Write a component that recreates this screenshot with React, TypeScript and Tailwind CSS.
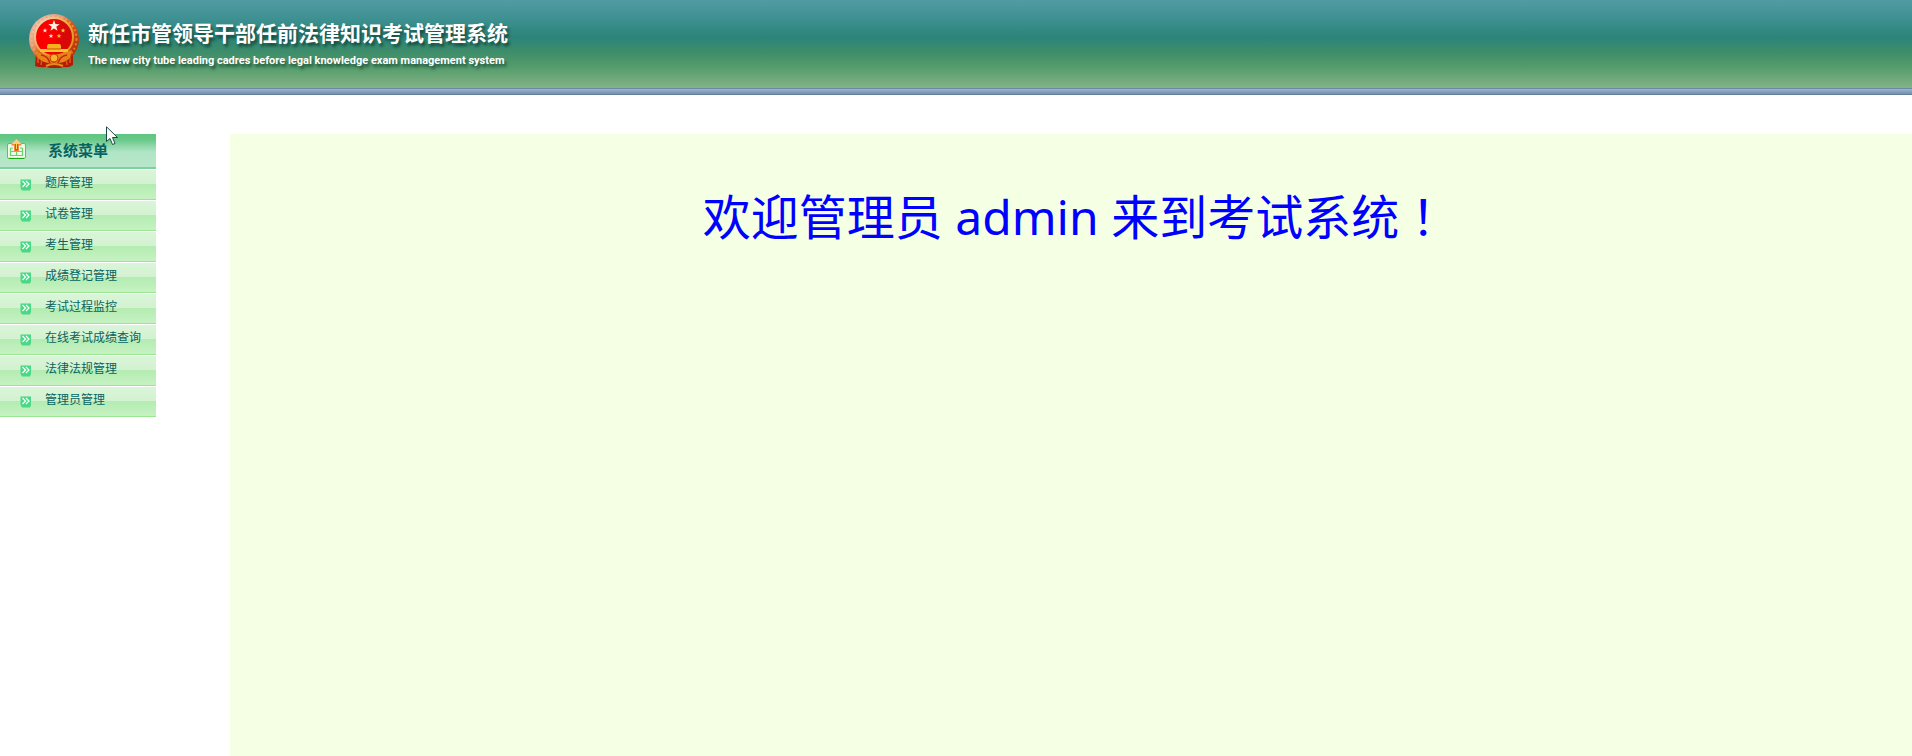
const MENU_ITEMS = [
  '题库管理',
  '试卷管理',
  '考生管理',
  '成绩登记管理',
  '考试过程监控',
  '在线考试成绩查询',
  '法律法规管理',
  '管理员管理',
];

const STAR = '0,-10 2.4,-3.2 9.5,-3.1 3.8,1.2 5.9,8.1 0,4 -5.9,8.1 -3.8,1.2 -9.5,-3.1 -2.4,-3.2';

function Emblem() {
  return (
    <svg className="h-14 w-13 shrink-0" viewBox="0 0 52 56" aria-hidden="true">
      <defs>
        <linearGradient id="wreath" x1="0" y1="0" x2="1" y2="1">
          <stop offset="0" stopColor="#f0c4b2" />
          <stop offset="0.35" stopColor="#e59a80" />
          <stop offset="0.5" stopColor="#dd5a18" />
          <stop offset="1" stopColor="#a81c04" />
        </linearGradient>
        <linearGradient id="ring" x1="0" y1="0" x2="1" y2="1">
          <stop offset="0" stopColor="#f6dccb" />
          <stop offset="0.4" stopColor="#f0b050" />
          <stop offset="1" stopColor="#e08a10" />
        </linearGradient>
        <linearGradient id="disc" x1="0" y1="0" x2="1" y2="0">
          <stop offset="0.5" stopColor="#fa0000" />
          <stop offset="0.7" stopColor="#d80808" />
        </linearGradient>
      </defs>
      <path d="M8 40 L7 53 Q12 55 18 54 L22 55 H32 L36 54 Q41 55 45 52 L45 40Z" fill="#b01c08" />
      <path d="M10 43 L10 50 M14 45 L13 52 M42 43 L42 50 M38 45 L39 52" stroke="#e05818" strokeWidth="1.5" />
      <circle cx="26" cy="26" r="25" fill="url(#wreath)" />
      <circle cx="26" cy="26" r="22.500" fill="none" stroke="url(#ring)" strokeWidth="2" strokeDasharray="2 2.5" opacity="0.75" />
      <circle cx="26" cy="24" r="19" fill="url(#disc)" stroke="url(#ring)" strokeWidth="2" />
      <polygon points={STAR} transform="translate(26 13) scale(0.6)" fill="#fff0dc" />
      <polygon points={STAR} transform="translate(17 17.5) scale(0.26)" fill="#ffe4cc" />
      <polygon points={STAR} transform="translate(35 17.5) scale(0.26)" fill="#ffd030" />
      <polygon points={STAR} transform="translate(23 23) scale(0.26)" fill="#ffe4cc" />
      <polygon points={STAR} transform="translate(31 23) scale(0.26)" fill="#ffc020" />
      <path d="M20 31 H32 L33 33 V36 H19 V33Z" fill="#f5b41c" />
      <path d="M12 36 H40 V39 H12Z" fill="#ffc62b" />
      <path d="M19 36 H33" stroke="#c82806" strokeWidth="0.8" />
      <path d="M7 37 Q16 44 26 42 T44 37 L42 45 Q34 52 26 49 Q18 52 10 45Z" fill="#e8821a" />
      <circle cx="26" cy="45" r="4" fill="#f8b428" stroke="#c93a08" />
      <path d="M13 42 Q20 43 22 50 M39 42 Q32 43 30 50" fill="none" stroke="#c82806" strokeWidth="1.6" />
      <path d="M18 53 Q26 49 35 53" fill="none" stroke="#e68a1c" strokeWidth="2" />
    </svg>
  );
}

function MenuHeaderIcon() {
  return (
    <svg className="h-5 w-5 shrink-0" viewBox="0 0 20 20" aria-hidden="true">
      <rect x="0.500" y="4.500" width="18" height="15" rx="1.5" fill="#eefbe8" stroke="#62bf50" />
      <path d="M2 19.500 H17" stroke="#18a818" strokeWidth="1.2" />
      <path d="M3.500 9 V16.500 H15.500 V9 M3.500 12.500 H15.500 M9.500 12 V16 M3.500 9 H6 M13 9 H15.500" fill="none" stroke="#67d36d" strokeWidth="1.2" />
      <path d="M9.500 0 L14.500 5 V6.500 H12 V12 H7 V6.500 H4.500 V5Z" fill="#f38a3c" />
      <path d="M9.500 0 L14.500 5 H4.500Z" fill="#ffc697" />
      <path d="M8 5 H11 V11.500 H8Z" fill="#ef4a10" />
      <path d="M9 3 H10 V10 H9Z" fill="#ffd25c" />
    </svg>
  );
}

function BulletIcon() {
  return (
    <svg className="h-3 w-3 shrink-0" viewBox="0 0 12 12" aria-hidden="true">
      <path d="M0.500 0.500 H11 V9 L10 11.500 H2 L0.500 9Z" fill="#48d886" />
      <path d="M2.500 2 L5.500 5 L2.500 8 M6 2 L9 5 L6 8" fill="none" stroke="#fff" strokeWidth="1.2" />
    </svg>
  );
}

function Pointer() {
  return (
    <svg className="absolute -top-2 left-[106px] h-5 w-3" viewBox="0 0 12 20" aria-hidden="true">
      <path d="M0.500 0.800 V15.500 L4 12.500 L6.500 18.500 L9 17.500 L6.500 11.500 H11.500Z" fill="#fff" stroke="#1d4a45" />
    </svg>
  );
}

export default function App() {
  return (
    <div className="flex min-h-screen flex-col bg-white font-['Liberation_Sans','Noto_Sans_CJK_SC',sans-serif]">
      <header className="flex h-[95px] shrink-0 flex-col">
        <div className="flex flex-1 items-start gap-2 bg-[linear-gradient(180deg,#519ba2_0%,#3f9193_20%,#2b8479_42%,#3f8e69_60%,#529b6b_75%,#84b385_100%)] pt-[13px] pl-7 text-white">
          <Emblem />
          <div className="flex flex-col pt-[5px] [text-shadow:2px_3px_3px_rgba(0,40,30,0.65)]">
            <h1 className="text-[21px] leading-8 font-bold whitespace-nowrap">新任市管领导干部任前法律知识考试管理系统</h1>
            <p className="mt-[3px] font-[Roboto,sans-serif] text-[11px] leading-4 font-bold whitespace-nowrap">
              The new city tube leading cadres before legal knowledge exam management system
            </p>
          </div>
        </div>
        <div className="h-[7px] border-t border-[#6789ab] border-b border-b-[#60809c] bg-linear-to-b from-[#9fb3cb] to-[#7390ab]" />
      </header>

      <div className="mt-[39px] flex flex-1 items-stretch gap-[74px]">
        <nav className="relative w-39 shrink-0 text-[#07635f]" aria-label="系统菜单">
          <h2 className="flex h-[35px] items-start gap-[21px] border-b-2 border-[#7dd19b] bg-[linear-gradient(180deg,#5dc67f_0%,#68c98a_18%,#8dd6a7_35%,#b0e5c5_55%,#b8e7ca_100%)] pl-[7px] text-[15px] leading-[34px] font-bold">
            <span className="pt-[5px]"><MenuHeaderIcon /></span>
            系统菜单
          </h2>
          <ul>
            {MENU_ITEMS.map((label) => (
              <li key={label}>
                <a
                  href="#"
                  className="flex h-[31px] items-center gap-[13px] border-t border-b border-t-white border-b-[#9be593] bg-[linear-gradient(180deg,#daf5d9_0%,#d3f2d0_48%,#b4ecb2_50%,#c6f2c2_100%)] pl-5 text-xs"
                >
                  <BulletIcon />
                  <span className="pb-1">{label}</span>
                </a>
              </li>
            ))}
          </ul>
          <Pointer />
        </nav>

        <main className="flex-1 bg-[#f4ffe4] pt-11 pl-2 text-center">
          <p className="font-['Noto_Sans','Noto_Sans_CJK_SC',sans-serif] text-5xl leading-[72px] text-[#0000ff]">
            欢迎管理员 admin 来到考试系统
            <span lang="zh-TW" className="font-['Noto_Sans_CJK_TC',sans-serif]">！</span>
          </p>
        </main>
      </div>
    </div>
  );
}
